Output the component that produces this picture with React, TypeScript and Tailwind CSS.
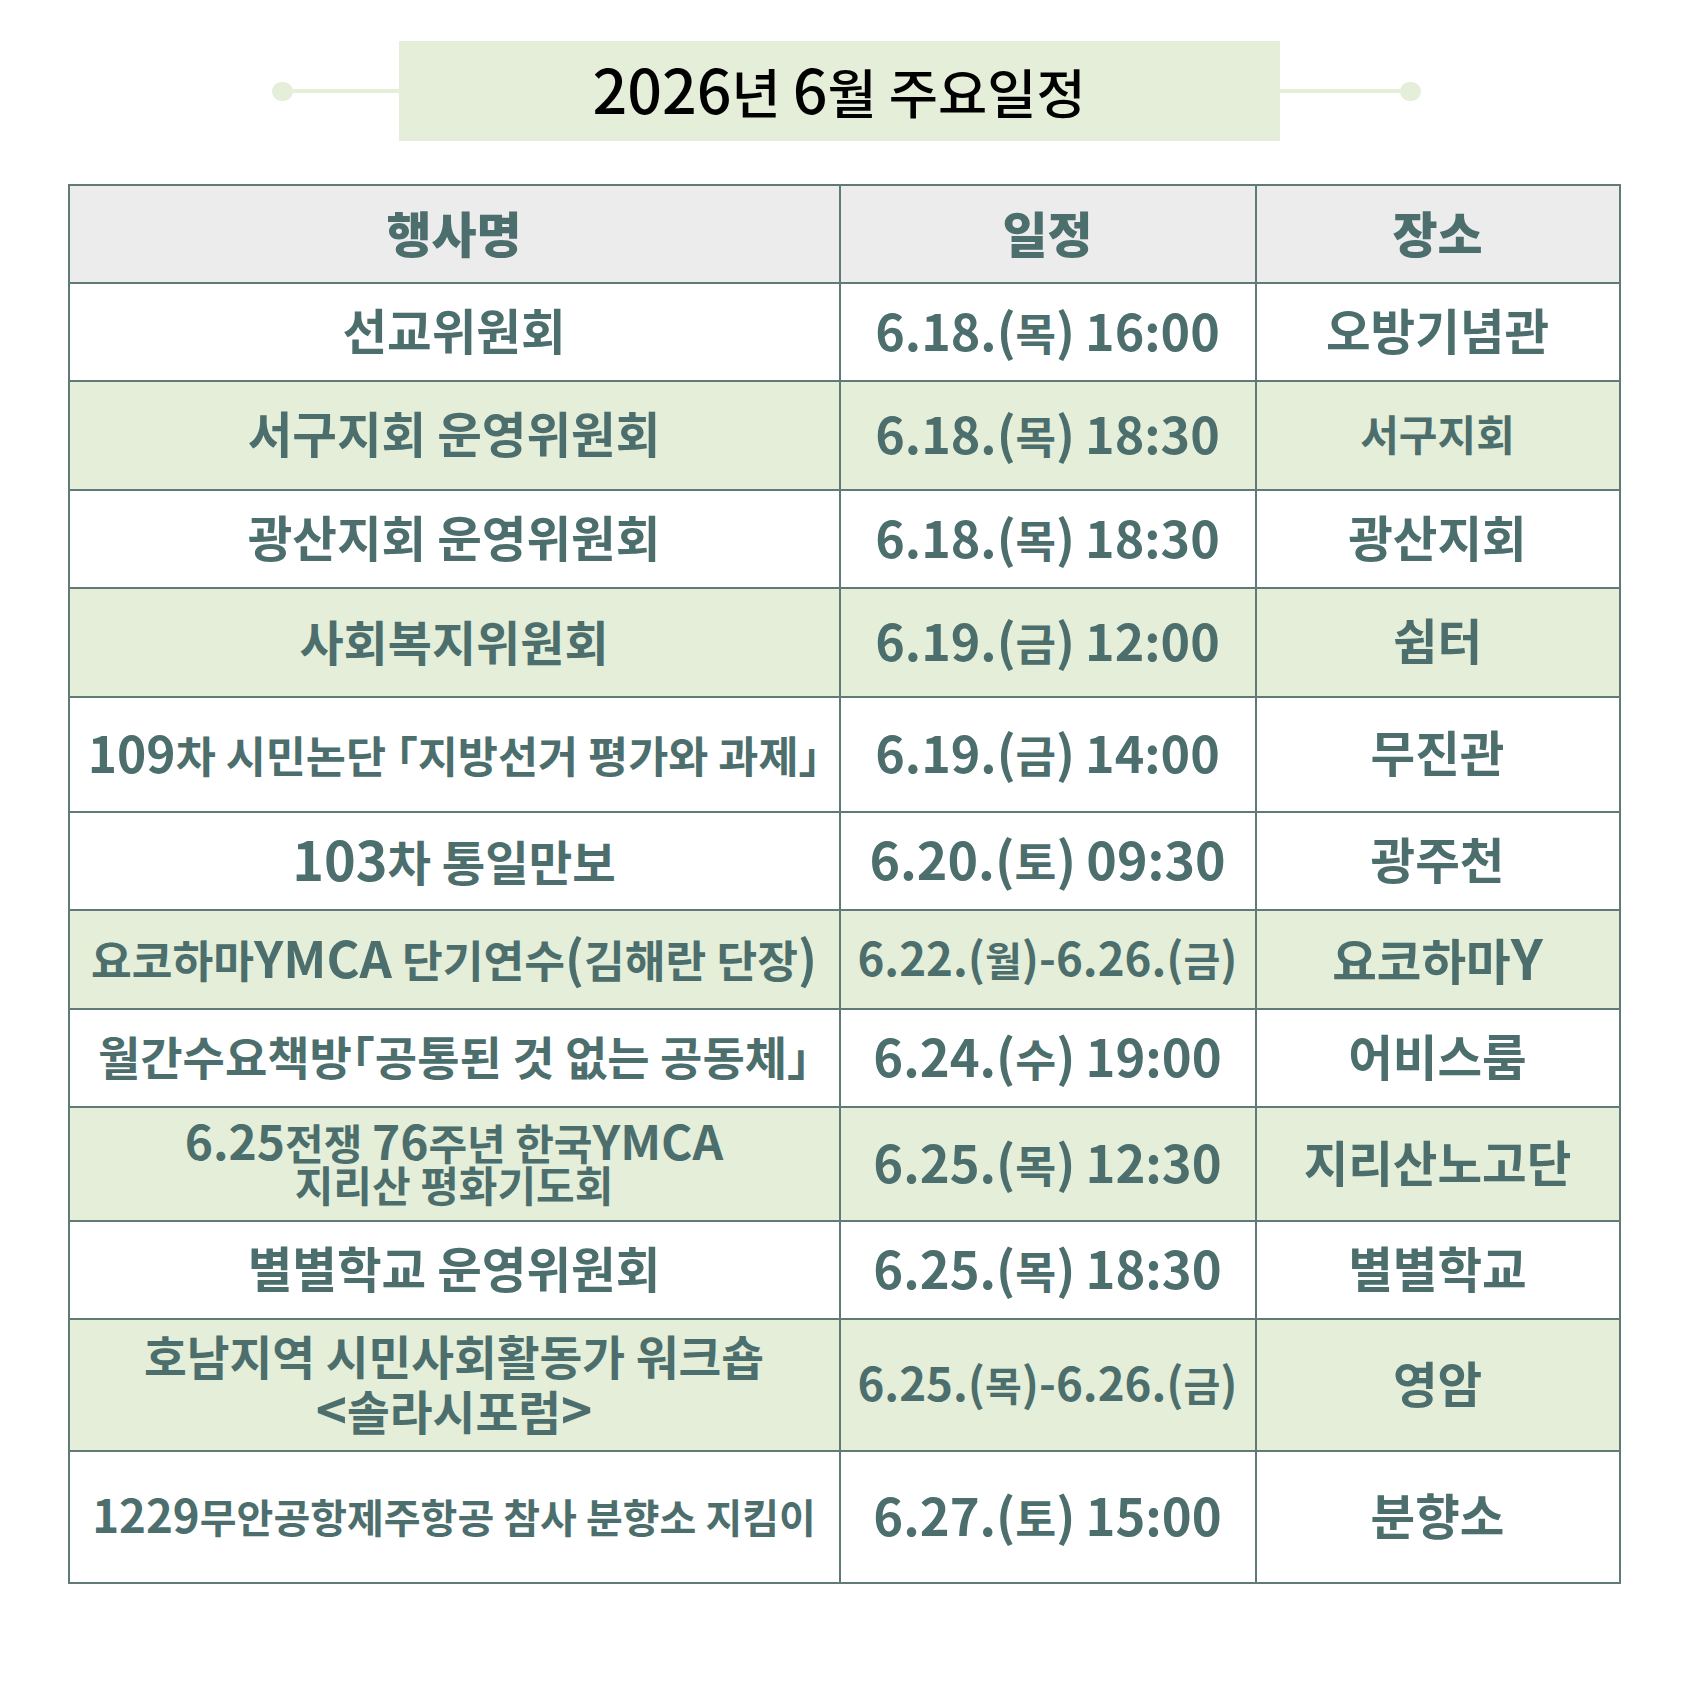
import * as React from "react";

type Row = {
  name: string[];
  ns: string;
  date: string;
  ds: string;
  place: string;
  ps: string;
  bg: string;
  h: string;
};

const rows: Row[] = [
  { name: ["선교위원회"], ns: "text-[48.5px]", date: "6.18.(목) 16:00", ds: "text-[44px]", place: "오방기념관", ps: "text-[48.5px]", bg: "bg-white", h: "h-[98px]" },
  { name: ["서구지회 운영위원회"], ns: "text-[48.5px]", date: "6.18.(목) 18:30", ds: "text-[44px]", place: "서구지회", ps: "text-[42px]", bg: "bg-[#e4eed8]", h: "h-[109px]" },
  { name: ["광산지회 운영위원회"], ns: "text-[48.5px]", date: "6.18.(목) 18:30", ds: "text-[44px]", place: "광산지회", ps: "text-[48.5px]", bg: "bg-white", h: "h-[98px]" },
  { name: ["사회복지위원회"], ns: "text-[48px]", date: "6.19.(금) 12:00", ds: "text-[44px]", place: "쉼터", ps: "text-[48.5px]", bg: "bg-[#e4eed8]", h: "h-[109px]" },
  { name: ["109차 시민논단 「지방선거 평가와 과제」"], ns: "text-[43.6px]", date: "6.19.(금) 14:00", ds: "text-[44px]", place: "무진관", ps: "text-[48.5px]", bg: "bg-white", h: "h-[115px]" },
  { name: ["103차 통일만보"], ns: "text-[47.3px]", date: "6.20.(토) 09:30", ds: "text-[45.5px]", place: "광주천", ps: "text-[48.5px]", bg: "bg-white", h: "h-[98px]" },
  { name: ["요코하마YMCA 단기연수(김해란 단장)"], ns: "text-[44.3px]", date: "6.22.(월)-6.26.(금)", ds: "text-[40px]", place: "요코하마Y", ps: "text-[48.5px]", bg: "bg-[#e4eed8]", h: "h-[99px]" },
  { name: ["월간수요책방「공통된 것 없는 공동체」"], ns: "text-[46px]", date: "6.24.(수) 19:00", ds: "text-[44.5px]", place: "어비스룸", ps: "text-[48.5px]", bg: "bg-white", h: "h-[98px]" },
  { name: ["6.25전쟁 76주년 한국YMCA", "지리산 평화기도회"], ns: "text-[42px] leading-[42px]", date: "6.25.(목) 12:30", ds: "text-[44.5px]", place: "지리산노고단", ps: "text-[48.5px]", bg: "bg-[#e4eed8]", h: "h-[114px]" },
  { name: ["별별학교 운영위원회"], ns: "text-[48.5px]", date: "6.25.(목) 18:30", ds: "text-[44.5px]", place: "별별학교", ps: "text-[48.5px]", bg: "bg-white", h: "h-[98px]" },
  { name: ["호남지역 시민사회활동가 워크숍", "<솔라시포럼>"], ns: "text-[46.5px] leading-[52px]", date: "6.25.(목)-6.26.(금)", ds: "text-[40px]", place: "영암", ps: "text-[48.5px]", bg: "bg-[#e4eed8]", h: "h-[132px]" },
  { name: ["1229무안공항제주항공 참사 분향소 지킴이"], ns: "text-[40px]", date: "6.27.(토) 15:00", ds: "text-[44.5px]", place: "분향소", ps: "text-[48.5px]", bg: "bg-white", h: "h-[130px]" },
];

// latin/digit runs are drawn a bit larger so they match the hangul height
const Mixed: React.FC<{ text: string }> = ({ text }) => {
  const parts = text.split(/([0-9A-Za-z.:()\-<>]+)/);
  return (
    <span>
      {parts.map((p, i) =>
        /^[0-9A-Za-z.:()\-<>]+$/.test(p) ? (
          <span key={i} className="text-[1.14em]">
            {p}
          </span>
        ) : (
          <span key={i}>{p}</span>
        )
      )}
    </span>
  );
};

const Cell: React.FC<{ lines: string[]; size: string; last?: boolean }> = ({ lines, size, last }) => (
  <div
    className={
      "flex flex-col items-center justify-center pb-[6px] text-center whitespace-nowrap font-bold text-[#4c6e6d] [font-feature-settings:'halt'] " +
      size +
      (last ? "" : " border-r-2 border-[#5f7a77]")
    }
  >
    {lines.map((l, i) => (
      <div key={i}>
        <Mixed text={l} />
      </div>
    ))}
  </div>
);

export default function App() {
  return (
    <div className="w-[1688px] h-[1688px] bg-white font-['Noto_Sans_CJK_KR','Noto_Sans_KR',sans-serif] leading-none">
      {/* Title */}
      <div className="flex items-center justify-center pt-[41px] pl-[4px]">
        <div className="w-[21px] h-[19px] rounded-full bg-[#e4eed8]" />
        <div className="w-[106px] h-[4px] bg-[#e4eed8]" />
        <div className="w-[881px] h-[100px] bg-[#e4eed8] flex items-center justify-center pb-[7px] text-[53.5px] font-medium text-black">
          <Mixed text="2026년 6월 주요일정" />
        </div>
        <div className="w-[120px] h-[4px] bg-[#e4eed8]" />
        <div className="w-[21px] h-[19px] rounded-full bg-[#e4eed8]" />
      </div>

      {/* Table */}
      <div className="mt-[43px] mx-auto w-[1553px] border-2 border-[#5f7a77]">
        <div className="grid grid-cols-[771px_416px_362px] h-[98px] bg-[#ececec] border-b-2 border-[#5f7a77]">
          {["행사명", "일정", "장소"].map((t, i) => (
            <div
              key={t}
              className={
                "flex items-center justify-center pb-[6px] text-[49px] font-black text-[#4c6e6d]" +
                (i < 2 ? " border-r-2 border-[#5f7a77]" : "")
              }
            >
              {t}
            </div>
          ))}
        </div>
        {rows.map((r, i) => (
          <div
            key={i}
            className={
              "grid grid-cols-[771px_416px_362px] " +
              r.h +
              " " +
              r.bg +
              (i < rows.length - 1 ? " border-b-2 border-[#5f7a77]" : "")
            }
          >
            <Cell lines={r.name} size={r.ns} />
            <Cell lines={[r.date]} size={r.ds} />
            <Cell lines={[r.place]} size={r.ps} last />
          </div>
        ))}
      </div>
    </div>
  );
}
